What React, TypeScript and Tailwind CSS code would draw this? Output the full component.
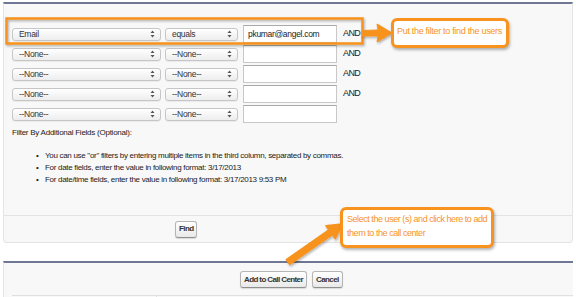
const font = "font-['Liberation_Sans',Arial,sans-serif]";

function Select({ label, width }: { label: string; width: string }) {
  return (
    <div
      className={`${width} h-[13px] flex items-center justify-between pl-[6px] pr-[5px] rounded-[3px] border border-[#c6c6c6] bg-gradient-to-b from-white to-[#ededed] shadow-[0_1px_0_rgba(0,0,0,0.05)] text-[8.5px] tracking-[-0.3px] text-[#333]`}
    >
      <span>{label}</span>
      <svg width="5" height="8" viewBox="0 0 5 8">
        <path d="M2.5 0.5 L4.5 3 L0.5 3 Z" fill="#555" />
        <path d="M2.5 7.5 L4.5 5 L0.5 5 Z" fill="#555" />
      </svg>
    </div>
  );
}

function FilterRow({ field, op, value, and }: { field: string; op: string; value: string; and: boolean }) {
  return (
    <div className="flex items-center h-[18px]">
      <Select label={field} width="w-[149px]" />
      <div className="ml-[4px]">
        <Select label={op} width="w-[73px]" />
      </div>
      <div className="ml-[5px] w-[94px] h-[18px] bg-white border border-[#c8c8c8] border-t-[#a9a9a9] flex items-center pl-[4px] text-[8.5px] tracking-[-0.3px] text-[#222]">
        {value}
      </div>
      {and && <span className="ml-[6px] text-[9px] tracking-[-0.6px] text-[#1a1a1a]">AND</span>}
    </div>
  );
}

function Button({ children }: { children: React.ReactNode }) {
  return (
    <div className="h-[17px] px-[3px] flex items-center justify-center whitespace-nowrap rounded-[3px] border border-[#b5b5b5] border-b-[#8f8f8f] bg-gradient-to-b from-white to-[#e9e9e9] text-[8px] font-bold tracking-[-0.6px] text-[#333] shadow-[0_1px_1px_rgba(0,0,0,0.12)]">
      {children}
    </div>
  );
}

const rows = [
  { field: "Email", op: "equals", value: "pkumar@angel.com", and: true },
  { field: "--None--", op: "--None--", value: "", and: true },
  { field: "--None--", op: "--None--", value: "", and: true },
  { field: "--None--", op: "--None--", value: "", and: true },
  { field: "--None--", op: "--None--", value: "", and: false },
];

const notes = [
  'You can use "or" filters by entering multiple items in the third column, separated by commas.',
  "For date fields, enter the value in following format: 3/17/2013",
  "For date/time fields, enter the value in following format: 3/17/2013 9:53 PM",
];

export default function App() {
  return (
    <div className={`relative w-[576px] h-[297px] bg-white overflow-hidden ${font}`}>
      {/* filter panel */}
      <div className="mx-[3px] mt-[2px] h-[241px] flex flex-col bg-[#f8f8f8] border-t-2 border-t-[#6f7794] border-x border-b border-x-[#e5e5e5] border-b-[#e2e2e2] rounded-b-[4px]">
        <div className="flex-1 pl-[8px] pt-[21px]">
          <div className="flex flex-col gap-[2px]">
            {rows.map((r, i) => (
              <FilterRow key={i} {...r} />
            ))}
          </div>
          <p className="mt-[4px] text-[8px] tracking-[-0.25px] leading-[11px] text-[#1a1a1a]">Filter By Additional Fields (Optional):</p>
          <ul className="mt-[12px] pl-[24px] text-[8px] tracking-[-0.3px] leading-[12px] text-[#1a1a1a]">
            {notes.map((n, i) => (
              <li key={i} className="flex">
                <span className="w-[9px]">•</span>
                {n}
              </li>
            ))}
          </ul>
        </div>
        <div className="h-[27px] border-t border-[#e3e3e3] flex items-center pl-[171px]">
          <Button>Find</Button>
        </div>
      </div>

      {/* action panel */}
      <div className="mx-[3px] mt-[18px] bg-[#f8f8f8] border-t-2 border-t-[#6f7794] border-l border-l-[#e5e5e5]">
        <div className="h-[32px] flex items-center pl-[236px] gap-[5px] pt-[1px]">
          <Button>Add to Call Center</Button>
          <Button>Cancel</Button>
        </div>
        <div className="ml-[8px] h-[10px] border-t border-[#e0e0e0] flex">
          <div className="w-[145px] border-r border-[#e0e0e0]" />
        </div>
      </div>

      {/* annotations */}
      <svg className="absolute inset-0 pointer-events-none" width="576" height="297" viewBox="0 0 576 297">
        <defs>
          <filter id="sh" x="-10%" y="-10%" width="120%" height="130%">
            <feDropShadow dx="1" dy="1.5" stdDeviation="1.2" floodColor="#000" floodOpacity="0.3" />
          </filter>
        </defs>
        <rect x="6.5" y="18.5" width="356" height="25" fill="none" stroke="#f7931e" strokeWidth="2.5" filter="url(#sh)" />
        <polygon
          points="362,30.5 378,30 377,24 392,33 377,42 378,36 362,36"
          fill="#f7931e"
          stroke="#f7931e"
          strokeWidth="1"
          strokeLinejoin="round"
          filter="url(#sh)"
        />
        <polygon
          points="289.7,264.4 332.3,234.6 335.3,238.7 342,224 325.9,225.7 328.9,229.8 286.3,259.6"
          fill="#f7931e"
          stroke="#f7931e"
          strokeWidth="1.5"
          strokeLinejoin="round"
          filter="url(#sh)"
        />
      </svg>

      <div className="absolute left-[391px] top-[18px] w-[118px] h-[30px] bg-white border-[3px] border-[#f7931e] rounded-[6px] shadow-[1px_2px_3px_rgba(0,0,0,0.3)] pl-[3px] pt-[4px] text-[9px] tracking-[-0.3px] leading-[12px] text-[#f7931e] whitespace-nowrap">
        Put the filter to find the users
      </div>
      <div className="absolute left-[340px] top-[207px] w-[154px] h-[41px] bg-white border-[3px] border-[#f7931e] rounded-[6px] shadow-[1px_2px_3px_rgba(0,0,0,0.3)] pl-[4px] pt-[2px] text-[9px] tracking-[-0.45px] leading-[14px] text-[#f7931e] whitespace-nowrap">
        Select the user (s) and click here to add
        <br />
        them to the call center
      </div>
    </div>
  );
}
